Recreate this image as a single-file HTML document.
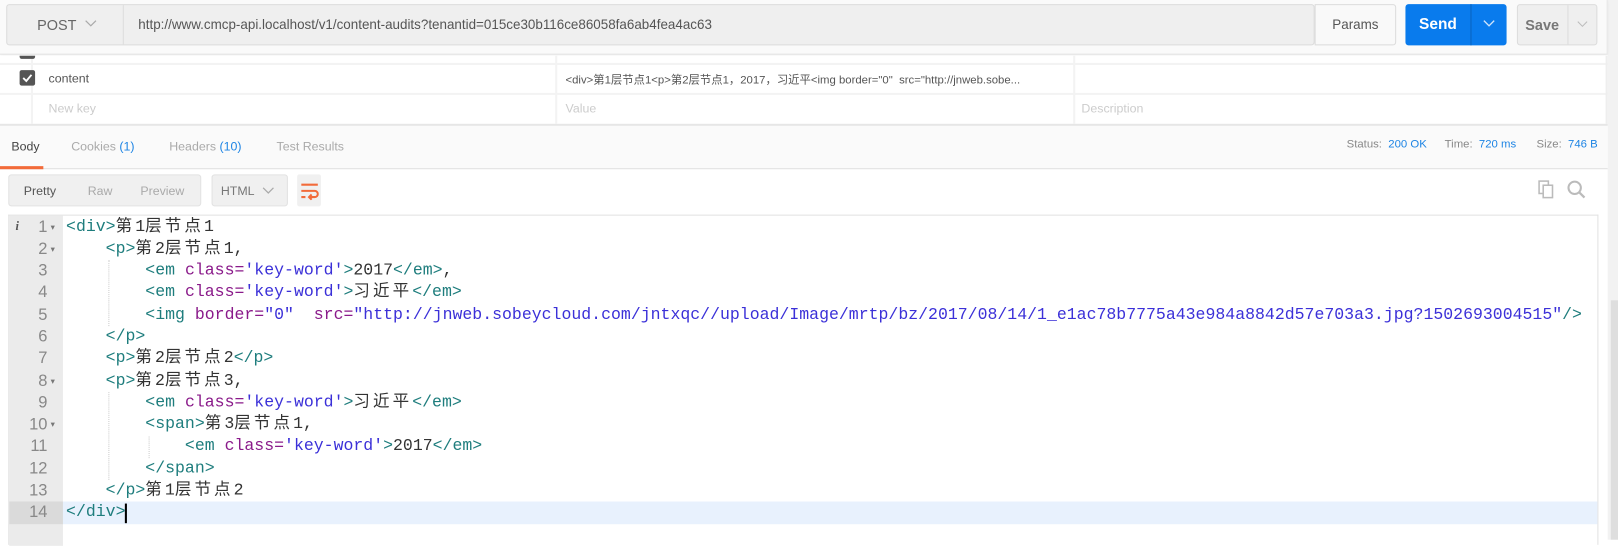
<!DOCTYPE html>
<html><head><meta charset="utf-8"><style>
*{box-sizing:border-box;margin:0;padding:0}
html,body{width:1618px;height:539px;overflow:hidden;background:#fff}
#w{position:absolute;left:0;top:0;width:1568px;height:523px;transform:scale(1.0319);transform-origin:0 0;font-family:"Liberation Sans","Noto Sans CJK SC",sans-serif;font-size:12px;color:#505050}
.a{position:absolute}
.code{font-family:"Liberation Mono","Noto Sans CJK SC",monospace;font-size:16px;white-space:pre;color:#333}
.t{color:#1e7d7d}.at{color:#8a1a8a}.s{color:#3b30d8}
.c{letter-spacing:3px}
.ln{position:absolute;left:8px;text-align:right;color:#888;font-family:"Liberation Sans",sans-serif;font-size:16px}
.guide{position:absolute;border-left:1px dotted #ccc}
</style></head><body><div id="w">
<!-- right strip -->
<div class="a" style="left:1558px;top:0;width:10px;height:523px;background:#f2f2f2"></div>
<div class="a" style="left:1561px;top:291px;width:7px;height:232px;background:#dedede"></div>
<!-- header -->
<div class="a" style="left:0;top:0;width:1558px;height:53px;background:#fafafa;border-bottom:1px solid #e2e2e2;border-right:1px solid #e6e6e6;box-shadow:0 1px 3px rgba(0,0,0,.08)"></div>
<div class="a" style="left:6px;top:4px;width:1268px;height:40px;background:#efefef;border:1px solid #dcdcdc;border-radius:3px"></div>
<div class="a" style="left:119px;top:5px;width:1px;height:38px;background:#dcdcdc"></div>
<div class="a" style="left:36px;top:16px;font-size:14px;color:#666">POST</div>
<svg class="a" style="left:82px;top:19px" width="12" height="8"><path d="M1 1l5 5 5-5" fill="none" stroke="#aaa" stroke-width="1.2"/></svg>
<div class="a" style="left:134px;top:16px;font-size:13px;color:#555">http://www.cmcp-api.localhost/v1/content-audits?tenantid=015ce30b116ce86058fa6ab4fea4ac63</div>
<div class="a" style="left:1274px;top:4px;width:79px;height:40px;background:#f9f9f9;border:1px solid #dcdcdc;border-radius:0 3px 3px 0;font-size:13px;color:#555;text-align:center;line-height:38px">Params</div>
<div class="a" style="left:1362px;top:4px;width:98px;height:40px;background:#097bed;border-radius:3px"></div>
<div class="a" style="left:1425px;top:4px;width:1px;height:40px;background:#0a63bf"></div>
<div class="a" style="left:1362px;top:4px;width:63px;height:40px;color:#fff;font-weight:bold;font-size:15px;text-align:center;line-height:40px">Send</div>
<svg class="a" style="left:1437px;top:19px" width="12" height="8"><path d="M1 1l5 5 5-5" fill="none" stroke="#cfe4fb" stroke-width="1.3"/></svg>
<div class="a" style="left:1470px;top:4px;width:78px;height:40px;background:#efefef;border:1px solid #dcdcdc;border-radius:3px"></div>
<div class="a" style="left:1519px;top:5px;width:1px;height:38px;background:#dcdcdc"></div>
<div class="a" style="left:1470px;top:4px;width:49px;height:40px;color:#777;font-weight:bold;font-size:14px;text-align:center;line-height:40px">Save</div>
<svg class="a" style="left:1528px;top:20px" width="11" height="7"><path d="M1 1l4.5 4.5 4.5-4.5" fill="none" stroke="#bbb" stroke-width="1"/></svg>
<!-- params table -->
<div class="a" style="left:0;top:54px;width:1558px;height:66px;background:#fff"></div>
<div class="a" style="left:0;top:61px;width:1558px;height:2px;background:#f3f3f3"></div>
<div class="a" style="left:0;top:90px;width:1558px;height:2px;background:#f3f3f3"></div>
<div class="a" style="left:0;top:120px;width:1558px;height:2px;background:#e6e6e6"></div>
<div class="a" style="left:30px;top:54px;width:2px;height:66px;background:#f3f3f3"></div>
<div class="a" style="left:538px;top:54px;width:2px;height:66px;background:#f3f3f3"></div>
<div class="a" style="left:1040px;top:54px;width:2px;height:66px;background:#f3f3f3"></div>
<div class="a" style="left:1556px;top:54px;width:2px;height:66px;background:#eee"></div>
<div class="a" style="left:19px;top:54px;width:15px;height:3px;background:#555;border-radius:0 0 2px 2px"></div>
<div class="a" style="left:19px;top:68px;width:15px;height:15px;background:#555;border-radius:2px"></div>
<svg class="a" style="left:21px;top:71px" width="11" height="9"><path d="M1.5 4.5l3 3 5-6" fill="none" stroke="#fff" stroke-width="1.8"/></svg>
<div class="a" style="left:47px;top:69px;font-size:12px;color:#555">content</div>
<div class="a" style="left:47px;top:98px;font-size:12px;color:#ccc">New key</div>
<div class="a" style="left:548px;top:69px;font-size:11px;color:#555">&lt;div&gt;第1层节点1&lt;p&gt;第2层节点1，2017，习近平&lt;img border="0"&nbsp; src="http://jnweb.sobe...</div>
<div class="a" style="left:548px;top:98px;font-size:12px;color:#ccc">Value</div>
<div class="a" style="left:1048px;top:98px;font-size:12px;color:#ccc">Description</div>
<!-- tabs -->
<div class="a" style="left:0;top:122px;width:1558px;height:42px;background:#fafafa;border-bottom:1px solid #e0e0e0"></div>
<div class="a" style="left:0;top:161px;width:42px;height:3px;background:#f26b3a"></div>
<div class="a" style="left:11px;top:135px;font-size:12px;color:#444">Body</div>
<div class="a" style="left:69px;top:135px;font-size:12px;color:#aaa">Cookies <span style="color:#1d84e4">(1)</span></div>
<div class="a" style="left:164px;top:135px;font-size:12px;color:#aaa">Headers <span style="color:#1d84e4">(10)</span></div>
<div class="a" style="left:268px;top:135px;font-size:12px;color:#aaa">Test Results</div>
<div class="a" style="left:1305px;top:134px;font-size:11px;color:#888">Status: <span style="color:#1d84e4">&nbsp;200 OK</span></div>
<div class="a" style="left:1400px;top:134px;font-size:11px;color:#888">Time: <span style="color:#1d84e4">&nbsp;720 ms</span></div>
<div class="a" style="left:1489px;top:134px;font-size:11px;color:#888">Size: <span style="color:#1d84e4">&nbsp;746 B</span></div>
<!-- toolbar -->
<div class="a" style="left:8px;top:169px;width:187px;height:31px;background:#f0f0f0;border:1px solid #e2e2e2;border-radius:3px"></div>
<div class="a" style="left:23px;top:178px;font-size:12px;color:#555">Pretty</div>
<div class="a" style="left:85px;top:178px;font-size:12px;color:#aaa">Raw</div>
<div class="a" style="left:136px;top:178px;font-size:12px;color:#aaa">Preview</div>
<div class="a" style="left:205px;top:169px;width:74px;height:31px;background:#f0f0f0;border:1px solid #e2e2e2;border-radius:3px"></div>
<div class="a" style="left:214px;top:178px;font-size:12px;color:#777">HTML</div>
<svg class="a" style="left:254px;top:181px" width="12" height="8"><path d="M1 1l5 5 5-5" fill="none" stroke="#aaa" stroke-width="1.2"/></svg>
<div class="a" style="left:288px;top:169px;width:23px;height:31px;background:#f0f0f0;border-radius:2px"></div>
<svg class="a" style="left:291px;top:176px" width="18" height="18"><path d="M1 3h16M1 9h13a3 3 0 0 1 0 6h-5M1 15h4M11 12.5l-2.5 2.5 2.5 2.5" fill="none" stroke="#f26b3a" stroke-width="2"/></svg>
<svg class="a" style="left:1490px;top:174px" width="18" height="20"><rect x="1.5" y="1.5" width="9" height="12" fill="none" stroke="#bbb" stroke-width="1.5"/><rect x="5.5" y="5.5" width="9" height="12" fill="#fff" stroke="#bbb" stroke-width="1.5"/></svg>
<svg class="a" style="left:1518px;top:174px" width="20" height="20"><circle cx="8" cy="8" r="6" fill="none" stroke="#bbb" stroke-width="2"/><path d="M12.5 12.5l5 5" stroke="#bbb" stroke-width="2.2"/></svg>
<!-- editor -->
<div class="a" style="left:8px;top:208px;width:1541px;height:320px;border:1px solid #e2e2e2;border-bottom:none;background:#fff"></div>
<div class="a" style="left:9px;top:209px;width:52px;height:320px;background:#ebebeb"></div>
<div class="a" style="left:61px;top:486px;width:1487px;height:22px;background:#e8f1fd"></div>
<div class="a" style="left:9px;top:486px;width:52px;height:22px;background:#dadada"></div>
<div class="a" style="left:15px;top:212px;font-family:'Liberation Serif',serif;font-style:italic;font-size:12px;color:#555;font-weight:bold">i</div>
<div class="guide" style="left:105px;top:252px;height:64px"></div>
<div class="guide" style="left:105px;top:380px;height:85px"></div>
<div class="guide" style="left:144px;top:423px;height:21px"></div>
<div class="a" style="left:121px;top:488px;width:2px;height:19px;background:#000"></div>
<div class="a code" style="left:64px;top:209.5px;line-height:21.3px"><span class="t">&lt;div&gt;</span><span class="c">第</span>1<span class="c">层节点</span>1
    <span class="t">&lt;p&gt;</span><span class="c">第</span>2<span class="c">层节点</span>1,
        <span class="t">&lt;em</span> <span class="at">class=</span><span class="s">'key-word'</span><span class="t">&gt;</span>2017<span class="t">&lt;/em&gt;</span>,
        <span class="t">&lt;em</span> <span class="at">class=</span><span class="s">'key-word'</span><span class="t">&gt;</span><span class="c">习近平</span><span class="t">&lt;/em&gt;</span>
        <span class="t">&lt;img</span> <span class="at">border=</span><span class="s">"0"</span>  <span class="at">src=</span><span class="s">"http://jnweb.sobeycloud.com/jntxqc//upload/Image/mrtp/bz/2017/08/14/1_e1ac78b7775a43e984a8842d57e703a3.jpg?1502693004515"</span><span class="t">/&gt;</span>
    <span class="t">&lt;/p&gt;</span>
    <span class="t">&lt;p&gt;</span><span class="c">第</span>2<span class="c">层节点</span>2<span class="t">&lt;/p&gt;</span>
    <span class="t">&lt;p&gt;</span><span class="c">第</span>2<span class="c">层节点</span>3,
        <span class="t">&lt;em</span> <span class="at">class=</span><span class="s">'key-word'</span><span class="t">&gt;</span><span class="c">习近平</span><span class="t">&lt;/em&gt;</span>
        <span class="t">&lt;span&gt;</span><span class="c">第</span>3<span class="c">层节点</span>1,
            <span class="t">&lt;em</span> <span class="at">class=</span><span class="s">'key-word'</span><span class="t">&gt;</span>2017<span class="t">&lt;/em&gt;</span>
        <span class="t">&lt;/span&gt;</span>
    <span class="t">&lt;/p&gt;</span><span class="c">第</span>1<span class="c">层节点</span>2
<span class="t">&lt;/div&gt;</span></div>
<div class="ln" style="top:209.5px;line-height:21.3px;width:38px">1<br>2<br>3<br>4<br>5<br>6<br>7<br>8<br>9<br>10<br>11<br>12<br>13<br>14</div>
<div class="a" style="left:49px;top:209.5px;line-height:21.3px;font-size:8px;color:#777">▾<br>▾<br><br><br><br><br><br>▾<br><br>▾</div>
</div></body></html>
